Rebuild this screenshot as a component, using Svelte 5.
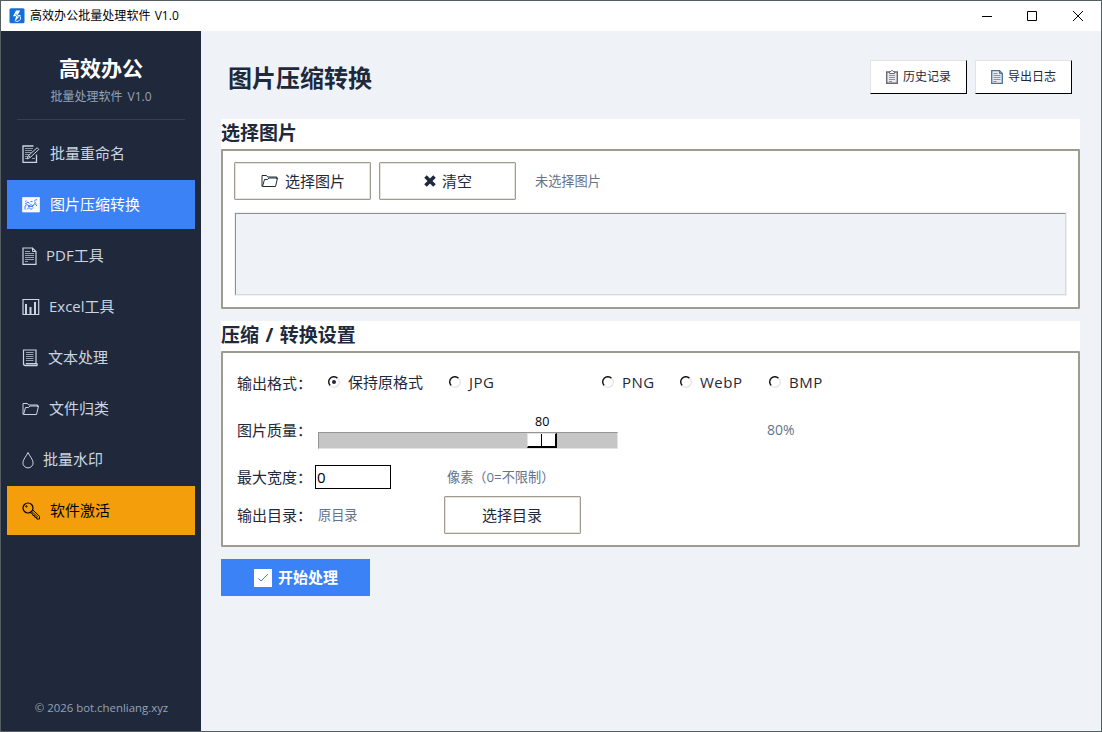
<script lang="ts">
  const navItems = [
    { id: "rename", name: "批量重命名", width: 18, gap: 10 },
    { id: "image", name: "图片压缩转换", width: 18, gap: 10 },
    { id: "pdf", name: "PDF工具", width: 16, gap: 8 },
    { id: "excel", name: "Excel工具", width: 18, gap: 9 },
    { id: "text", name: "文本处理", width: 17, gap: 9 },
    { id: "folder", name: "文件归类", width: 18, gap: 9 },
    { id: "water", name: "批量水印", width: 13, gap: 8 },
    { id: "key", name: "软件激活", width: 18, gap: 10 },
  ];

  const formats = [
    { id: "keep", name: "保持原格式" },
    { id: "jpg", name: "JPG" },
    { id: "png", name: "PNG" },
    { id: "webp", name: "WebP" },
    { id: "bmp", name: "BMP" },
  ];

  let current = $state("image");
  let format = $state("keep");
  let quality = $state(80);
  let maxWidth = $state("0");

  let thumbLeft = $derived(((quality - 10) / 90) * 268 - 0.44);
</script>

{#snippet icon(name: string, width: number)}
  <svg class="icon" {width} height="18" viewBox="0 0 {width} 18" fill="none" stroke="currentColor">
    {#if name === "rename"}
      <path d="M14.500 9.500v8H1V1h10.500" stroke-width="1.300" />
      <path d="M3 3.500h8M3 5.500h7M3 7.500h6M3 9.500h4M3 11.500h3M3 13.500h2M10 13.500h3" opacity=".65" />
      <path d="M5 14l1.500-3.500 8.700-7.800 1.600 1.700-8.300 7.800zM6.500 10.500l2 1.700" />
    {:else if name === "image"}
      <path d="M.5 1.500h17v14.500H.5z" fill="currentColor" fill-opacity=".95" stroke-opacity=".65" />
      <g class="cutout">
        <path d="M3 5.500l1.500-.7M3 8l3-2 1.500 1.500M8.500 5.500h2M12.500 4.500l2.500-1M3 13.500V10l2-1.500 2 1.500 2-1.500 2 1.500 1.500-2.500L14.500 9v1" />
        <path d="M5 13.500l2-2 2 2 2-2M12.500 5.500l1.500 2M6 10.500h5" />
      </g>
    {:else if name === "pdf"}
      <path d="M1 1h9.500L14 4.500v12.800H1z" stroke-width="1.200" />
      <path d="M10.500.8v3.700H14" />
      <path d="M3 4.500h5M3 6.500h9M3 8.500h9M3 10.500h9M3 12.500h9M3 14.500h3" opacity=".7" />
    {:else if name === "excel"}
      <path d="M1 1.500h15.700v15H1z" stroke-width="1.200" />
      <path d="M4 6v10M8.500 9v7M13 4v12" stroke-width="2" />
    {:else if name === "text"}
      <path d="M1.500 15V1H14v13.500" stroke-width="1.200" />
      <path d="M1.500 14.500q0 2 1.800 2h11.500q1-.9 0-1.800H3.800" stroke-width="1.300" />
      <path d="M4 3.500h7.500M4 5.500h7.500M4 7.500h7.500M4 9.500h7.500M4 11.500h7.500" opacity=".7" />
    {:else if name === "folder"}
      <path d="M1 14.500V3.500h4.500l1.200 1.500h9v2" />
      <path d="M1.500 14.500h13l2-8.500H8L6.500 7.500H3.500z" />
    {:else if name === "water"}
      <path d="M6 1.500C4.500 5 .9 8.500 .9 11.800a5.100 5.100 0 0 0 10.200 0C11.100 8.500 7.500 5 6 1.500z" />
    {:else if name === "key"}
      <circle cx="6" cy="6" r="5" stroke-width="1.200" />
      <circle cx="4.400" cy="4.400" r=".7" />
      <path d="M10.300 7.500l7.200 6.800v2.700h-2.700l-.3-1.600-1.700-.2-.2-1.600-1.700-.1-.2-1.600-3-1.700" />
      <path d="M9.500 9.300l6.500 6" stroke-width=".8" />
    {/if}
  </svg>
{/snippet}

<div class="window">
  <header class="titlebar">
    <svg class="logo" width="16" height="16" viewBox="0 0 16 16">
      <rect x=".5" y=".3" width="15" height="15" rx="1.500" fill="#1470d8" />
      <path d="M7 2.500L4 8.300h3.200L5.500 13.500 12 7H8.800l2.400-4.500z" fill="#fff" />
      <path d="M11.500 8.500v3L9 13.300H6.500M6.800 5.800L10 8" fill="none" stroke="#d7e7fa" />
      <path d="M6.500 6.500l3.200 2.200" stroke="#1470d8" stroke-width=".8" />
    </svg>
    <span class="caption">高效办公批量处理软件 V1.0</span>
    <div class="controls">
      <svg width="12" height="12"><path d="M1 6.500h10" /></svg>
      <svg width="12" height="12"><path d="M1.500 1.500h9v9h-9z" /></svg>
      <svg width="12" height="12"><path d="M1 1l10 10M11 1L1 11" /></svg>
    </div>
  </header>

  <div class="body">
    <aside class="sidebar">
      <h1>高效办公</h1>
      <p class="subtitle">批量处理软件 V1.0</p>
      <nav>
        {#each navItems as item}
          <button
            class="nav-item"
            class:active={current === item.id}
            class:activate={item.id === "key"}
            style="gap: {item.gap}px"
            onclick={() => (current = item.id)}
          >
            {@render icon(item.id, item.width)}
            <span>{item.name}</span>
          </button>
        {/each}
      </nav>
      <p class="copyright">© 2026 bot.chenliang.xyz</p>
    </aside>

    <main>
      <div class="page-head">
        <h2>图片压缩转换</h2>
        <button class="raised">
          <svg width="12" height="14" viewBox="0 0 12 14" fill="none" stroke="#6b6a6c">
            <path d="M.7 2h10.600v11.300H.7z" fill="#e8eaed" stroke-width="1.400" />
            <path d="M3.500 3.500V1.500h1.300l.7-1h1l.7 1h1.300v2z" fill="#fff" />
            <path d="M3 5.500h6M3 7.500h6M3 9.500h6M3 11.500h3" stroke="#8a91a0" />
          </svg>
          <span>历史记录</span>
        </button>
        <button class="raised">
          <svg width="12" height="14" viewBox="0 0 12 14" fill="none" stroke="#4f7392">
            <path d="M.7.7h7.800l2.800 2.800v9.800H.7z" fill="#e8eaed" stroke-width="1.300" />
            <path d="M8.500.7v2.800h2.800" />
            <path d="M2.500 3.500h4M2.500 5.500h7M2.500 7.500h7M2.500 9.500h7M2.500 11.500h3" stroke="#8a91a0" />
          </svg>
          <span>导出日志</span>
        </button>
      </div>

      <section>
        <h3>选择图片</h3>
        <div class="group">
          <div class="toolbar">
            <button class="ridge pick">
              {@render icon("folder", 18)}
              <span>选择图片</span>
            </button>
            <button class="ridge clear">
              <svg width="12" height="12" viewBox="0 0 12 12" stroke="currentColor" stroke-width="3.600">
                <path d="M1.500 1.500l9 9M10.500 1.500l-9 9" />
              </svg>
              <span>清空</span>
            </button>
            <span class="muted">未选择图片</span>
          </div>
          <div class="file-list"></div>
        </div>
      </section>

      <section>
        <h3 class="spaced">压缩 / 转换设置</h3>
        <div class="group settings">
          <span class="label">输出格式：</span>
          {#each formats as f}
            <button class="radio" onclick={() => (format = f.id)}>
              <svg width="12" height="12" viewBox="0 0 12 12" fill="none">
                <path d="M9.500 2.200A5 5 0 0 0 2.200 9.500" stroke="#111" stroke-width="1.400" />
                <path d="M9.800 2.500A5 5 0 0 1 2.500 9.800" stroke="#e3e3e3" stroke-width="1.200" />
                {#if format === f.id}
                  <circle cx="6" cy="6" r="2" fill="#1e293b" />
                {/if}
              </svg>
              <span>{f.name}</span>
            </button>
          {/each}

          <span class="label row-start quality">图片质量：</span>
          <div class="slider">
            <span class="value" style="margin-left: {thumbLeft + 9}px">{quality}</span>
            <div class="trough">
              <div class="thumb" style="margin-left: {thumbLeft}px"><i></i><i></i></div>
            </div>
          </div>
          <span class="muted percent">{quality}%</span>

          <span class="label row-start">最大宽度：</span>
          <input bind:value={maxWidth} />
          <span class="muted hint">像素（0=不限制）</span>

          <span class="label row-start">输出目录：</span>
          <span class="muted dir">原目录</span>
          <button class="ridge browse">选择目录</button>
        </div>
      </section>

      <button class="start">
        <svg width="18" height="18" viewBox="0 0 18 18">
          <path d="M0 0h18v18H0z" fill="#fff" />
          <path d="M4.500 9.500L7 12l7-7" fill="none" stroke="#3b82f6" />
        </svg>
        <span>开始处理</span>
      </button>
    </main>
  </div>
</div>

<style>
  :global(body) {
    margin: 0;
    overflow: hidden;
  }

  .window {
    box-sizing: border-box;
    width: 1102px;
    height: 732px;
    display: flex;
    flex-direction: column;
    border: 1px solid #555e61;
    background: #eff3f8;
    color: #1e293b;
    font-family: "Open Sans", "Noto Sans CJK SC", sans-serif;
    font-size: 15px;
    line-height: 20px;
    white-space: nowrap;
  }

  h1,
  h2,
  h3,
  p {
    margin: 0;
  }

  button {
    box-sizing: border-box;
    display: flex;
    align-items: center;
    margin: 0;
    padding: 0;
    border: none;
    border-radius: 0;
    background: none;
    color: inherit;
    font: inherit;
  }

  svg {
    display: block;
    flex: none;
  }

  .titlebar {
    display: flex;
    align-items: center;
    height: 30px;
    flex: none;
    padding-left: 8px;
    background: #fff;
    color: #000;
    font-size: 12px;
  }

  .logo {
    margin-right: 5px;
  }

  .caption {
    flex: 1;
    letter-spacing: 0.05px;
    word-spacing: 1px;
  }

  .controls {
    display: flex;
    gap: 34px;
    padding-right: 17px;
  }

  .controls svg {
    fill: none;
    stroke: #000;
  }

  .controls svg:first-child {
    margin-right: -1px;
  }

  .body {
    display: flex;
    flex: 1;
  }

  .sidebar {
    box-sizing: border-box;
    width: 200px;
    display: flex;
    flex-direction: column;
    padding: 22px 6px 14px;
    background: #1f293b;
    text-align: center;
  }

  h1 {
    color: #fff;
    font-size: 21px;
    line-height: 30px;
  }

  .subtitle {
    margin: 4px 10px 0;
    padding-bottom: 12px;
    border-bottom: 1px solid #334155;
    color: #94a3b8;
    font-size: 12px;
    word-spacing: 2px;
  }

  nav {
    display: flex;
    flex-direction: column;
    gap: 2px;
    margin-top: 9px;
    flex: 1;
  }

  .nav-item {
    width: 188px;
    height: 49px;
    padding-left: 15px;
    color: #cbd5e1;
  }

  .nav-item span {
    padding-bottom: 2px;
  }

  .nav-item.active {
    background: #3b82f6;
    color: #fff;
  }

  .nav-item.activate {
    background: #f59e0b;
    color: #000;
  }

  .cutout {
    stroke: #3b82f6;
  }

  .copyright {
    padding-left: 1px;
    color: #94a3b8;
    font-size: 11.400px;
    line-height: 18px;
  }

  main {
    flex: 1;
    padding: 0 21px 0 20px;
  }

  .page-head {
    box-sizing: border-box;
    display: flex;
    align-items: center;
    gap: 8px;
    height: 88px;
    padding: 3px 8px 0 7px;
  }

  h2 {
    flex: 1;
    padding-top: 2px;
    font-size: 24px;
    line-height: 32px;
  }

  .raised {
    justify-content: center;
    gap: 5px;
    width: 97px;
    height: 34px;
    border: 1px solid #000;
    border-top-color: #e3e3e3;
    border-left-color: #e3e3e3;
    background: #fff;
    font-size: 12px;
  }

  section {
    margin-bottom: 12px;
    background: #fff;
  }

  h3 {
    height: 30px;
    font-size: 19px;
    line-height: 28px;
  }

  .spaced {
    word-spacing: 1.500px;
  }

  .group {
    box-sizing: border-box;
    border: 2px solid #9f9b90;
    border-radius: 1px;
    padding: 11px;
    height: 160px;
  }

  .toolbar {
    display: flex;
    align-items: center;
    gap: 8px;
  }

  .toolbar .muted {
    margin-left: 11px;
    padding-bottom: 1px;
  }

  .ridge {
    justify-content: center;
    gap: 6px;
    width: 137px;
    height: 38px;
    border: 1px solid #9f9b90;
    border-radius: 1px;
    box-shadow: inset 0 0 0 1px #e6e4df;
  }

  .pick,
  .clear {
    padding-left: 1px;
  }

  .browse {
    padding-right: 1px;
  }

  .muted {
    color: #64748b;
    font-size: 13.200px;
  }

  .file-list {
    box-sizing: border-box;
    height: 82px;
    margin: 13px 1px 0;
    border: 1px solid #8d9195;
    border-right-color: #d5d9dd;
    border-bottom-color: #d5d9dd;
    outline: 1px solid #eff1f3;
    background: #eff3f8;
  }

  .settings {
    display: grid;
    grid-template-columns: 78px 129px 153px 78px 89px 1fr;
    grid-template-rows: 42px 53px 39px 38px;
    align-items: center;
    height: 196px;
    padding: 9px 14px 11px;
  }

  .row-start {
    grid-column-start: 1;
  }

  .quality {
    padding-bottom: 2px;
  }

  .radio {
    gap: 8px;
    padding-left: 5px;
    height: 22px;
    margin-top: -2px;
    letter-spacing: 0.5px;
  }

  .label + .radio {
    padding-left: 13px;
    letter-spacing: 0;
  }

  .slider {
    grid-column: 2 / 5;
    align-self: end;
    width: 300px;
    margin-left: 3px;
    margin-bottom: 8px;
  }

  .value {
    display: block;
    color: #000;
    font-size: 12.500px;
  }

  .trough {
    box-sizing: border-box;
    height: 17px;
    border: 1px solid #969696;
    border-right-color: #e3e3e3;
    border-bottom-color: #e3e3e3;
    background: #c6c6c6;
  }

  .thumb {
    box-sizing: border-box;
    display: flex;
    width: 30px;
    height: 15px;
    border: 1px solid #e3e3e3;
    border-right: 2px solid #000;
    border-bottom: 2px solid #000;
    background: #fff;
  }

  .thumb i {
    flex: 1;
  }

  .thumb i:first-child {
    border-right: 1px solid #000;
  }

  .percent {
    grid-column: 6;
    padding-left: 3px;
    padding-bottom: 2px;
    font-size: 14px;
  }

  input {
    box-sizing: border-box;
    width: 76px;
    height: 24px;
    padding: 0 1px;
    border: 1px solid #000;
    border-radius: 0;
    outline: none;
    background: #fff;
    color: #000;
    font: inherit;
  }

  .hint,
  .dir {
    padding-left: 3px;
  }

  .dir {
    padding-bottom: 1px;
  }

  .start {
    justify-content: center;
    gap: 6px;
    width: 149px;
    height: 37px;
    padding-left: 1px;
    background: #3b82f6;
    color: #fff;
    font-weight: bold;
  }

  .start span {
    padding-bottom: 2px;
  }
</style>
